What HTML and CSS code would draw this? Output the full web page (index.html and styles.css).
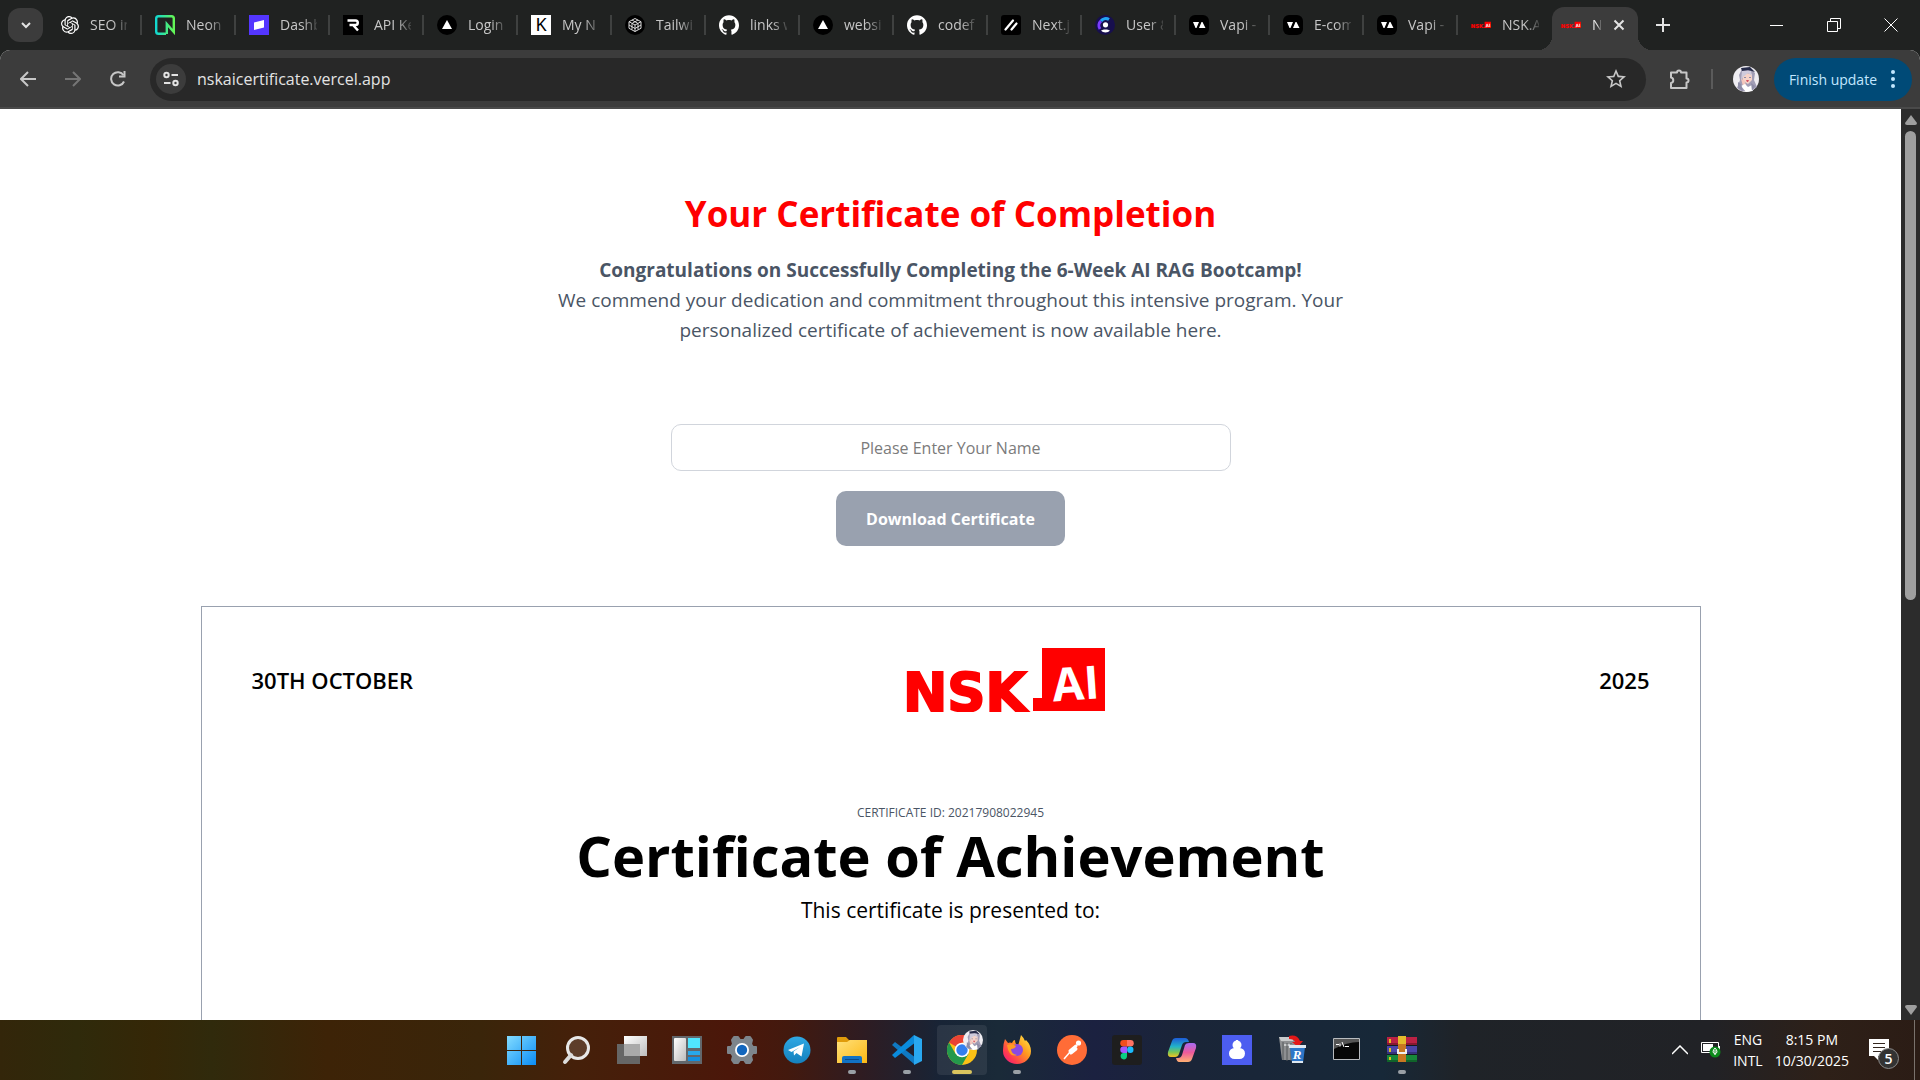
FILE: index.html
```html
<!DOCTYPE html>
<html lang="en">
<head>
<meta charset="utf-8">
<title>NSK.AI Certificate</title>
<link rel="stylesheet" href="styles.css">
</head>
<body>
<svg class="defs" aria-hidden="true">
  <defs>
    <linearGradient id="neon" x1="0" y1="0" x2="1" y2="0"><stop offset="0" stop-color="#12d8d0"/><stop offset="1" stop-color="#63f655"/></linearGradient>
    <linearGradient id="win" x1="0" y1="0" x2="1" y2="1"><stop offset="0" stop-color="#83dcff"/><stop offset="1" stop-color="#0a8cf5"/></linearGradient>
    <linearGradient id="silver" x1="0" y1="0" x2="1" y2="1"><stop offset="0" stop-color="#fff"/><stop offset="1" stop-color="#bdbdbd"/></linearGradient>
    <linearGradient id="folder" x1="0" y1="0" x2="1" y2="1"><stop offset="0" stop-color="#ffe07a"/><stop offset="1" stop-color="#fcb813"/></linearGradient>
    <linearGradient id="tele" x1="0" y1="0" x2="0" y2="1"><stop offset="0" stop-color="#2fa8e4"/><stop offset="1" stop-color="#1480bd"/></linearGradient>
    <linearGradient id="fox" x1="1" y1="0" x2="0" y2="1"><stop offset="0" stop-color="#fff04a"/><stop offset=".4" stop-color="#ff9a1f"/><stop offset=".75" stop-color="#ff3a50"/><stop offset="1" stop-color="#e4138f"/></linearGradient>
    <linearGradient id="copA" x1="0" y1="0" x2="0" y2="1"><stop offset="0" stop-color="#1d5bd8"/><stop offset=".45" stop-color="#22b3c9"/><stop offset=".75" stop-color="#7cc653"/><stop offset="1" stop-color="#f6c324"/></linearGradient>
    <linearGradient id="copB" x1="0" y1="0" x2="0" y2="1"><stop offset="0" stop-color="#a66af2"/><stop offset=".5" stop-color="#ee5a9a"/><stop offset="1" stop-color="#ffb072"/></linearGradient>
    <symbol id="i-github" viewBox="0 0 24 24"><path fill="#fff" d="M12 .297c-6.63 0-12 5.373-12 12 0 5.303 3.438 9.8 8.205 11.385.6.113.82-.258.82-.577 0-.285-.01-1.04-.015-2.04-3.338.724-4.042-1.61-4.042-1.61C4.422 18.07 3.633 17.7 3.633 17.7c-1.087-.744.084-.729.084-.729 1.205.084 1.838 1.236 1.838 1.236 1.07 1.835 2.809 1.305 3.495.998.108-.776.417-1.305.76-1.605-2.665-.3-5.466-1.332-5.466-5.93 0-1.31.465-2.38 1.235-3.22-.135-.303-.54-1.523.105-3.176 0 0 1.005-.322 3.3 1.23.96-.267 1.98-.399 3-.405 1.02.006 2.04.138 3 .405 2.28-1.552 3.285-1.23 3.285-1.23.645 1.653.24 2.873.12 3.176.765.84 1.23 1.91 1.23 3.22 0 4.61-2.805 5.625-5.475 5.92.42.36.81 1.096.81 2.22 0 1.606-.015 2.896-.015 3.286 0 .315.21.69.825.57C20.565 22.092 24 17.592 24 12.297c0-6.627-5.373-12-12-12"/></symbol>
    <symbol id="i-vercel" viewBox="0 0 20 20"><circle cx="10" cy="10" r="10"/><path fill="#fff" d="M10 5l5 9H5z"/></symbol>
    <symbol id="i-vapi" viewBox="0 0 20 20"><rect width="20" height="20" rx="6"/><path fill="#fff" d="M4 7h6l-2.500 6h-1zM12.500 7h1l3 6h-6.500z"/></symbol>
    <symbol id="i-nsk" viewBox="0 0 200 64"><path fill="#f00" d="M136 0h63v63h-72V50h9z"/><text class="nsk-word" x="-3" y="63">NSK</text><text class="nsk-ai" x="146" y="52" transform="rotate(-4 168 34)">AI</text></symbol>
    <symbol id="i-face" viewBox="0 0 26 26"><circle cx="13" cy="13" r="13" fill="#efedf2"/><path fill="#a19db5" d="M4 22l3-8-1-5 3-6 8-1 5 5-1 7 3 7-6 4H8z"/><path fill="#f6d3c8" d="M9 9l4-2 6 1v6l-4 4-5-3z"/><path fill="#272c4a" d="M8 2l9-1 5 5-7-2-6 1z"/><path fill="#cfcbdc" d="M9 5l9 0 1 5-4-3-5 4-2 3z"/><path fill="#f3c7bd" d="M8 13l3 1 2 5-3 1z"/><path fill="#fff" d="M8 20l4-2 3 3 4-2 1 6-7 1z"/><path fill="#8d8ca6" d="M5 16l3 2 2 7-5-3zM18 17l4 3-3 5zM11 11h2v1h-2zM16 11h2v1h-2z"/><path fill="#d65261" d="M13 14h3l-1 2h-1z"/></symbol>
  </defs>
</svg>

<header class="tabstrip">
  <button class="tab-search" aria-label="Search tabs"><svg width="14" height="14" viewBox="0 0 14 14"><path d="M3 5l4 4 4-4" fill="none" stroke="#e3e3e3" stroke-width="2"/></svg></button>
  <nav class="tabs">
    <a class="tab" href="#"><svg class="fav small" viewBox="0 0 24 24"><path fill="#fff" d="M22.2819 9.8211a5.9847 5.9847 0 0 0-.5157-4.9108 6.0462 6.0462 0 0 0-6.5098-2.9A6.0651 6.0651 0 0 0 4.9807 4.1818a5.9847 5.9847 0 0 0-3.9977 2.9 6.0462 6.0462 0 0 0 .7427 7.0966 5.98 5.98 0 0 0 .511 4.9107 6.051 6.051 0 0 0 6.5146 2.9001A5.9847 5.9847 0 0 0 13.2599 24a6.0557 6.0557 0 0 0 5.7718-4.2058 5.9894 5.9894 0 0 0 3.9977-2.9001 6.0557 6.0557 0 0 0-.7475-7.0729zm-9.022 12.6081a4.4755 4.4755 0 0 1-2.8764-1.0408l.1419-.0804 4.7783-2.7582a.7948.7948 0 0 0 .3927-.6813v-6.7369l2.02 1.1686a.071.071 0 0 1 .038.052v5.5826a4.504 4.504 0 0 1-4.4945 4.4944zm-9.6607-4.1254a4.4708 4.4708 0 0 1-.5346-3.0137l.142.0852 4.783 2.7582a.7712.7712 0 0 0 .7806 0l5.8428-3.3685v2.3324a.0804.0804 0 0 1-.0332.0615L9.74 19.9502a4.4992 4.4992 0 0 1-6.1408-1.6464zM2.3408 7.8956a4.485 4.485 0 0 1 2.3655-1.9728V11.6a.7664.7664 0 0 0 .3879.6765l5.8144 3.3543-2.0201 1.1685a.0757.0757 0 0 1-.071 0l-4.8303-2.7865A4.504 4.504 0 0 1 2.3408 7.872zm16.5963 3.8558L13.1038 8.364 15.1192 7.2a.0757.0757 0 0 1 .071 0l4.8303 2.7913a4.4944 4.4944 0 0 1-.6765 8.1042v-5.6772a.79.79 0 0 0-.407-.667zm2.0107-3.0231l-.142-.0852-4.7735-2.7818a.7759.7759 0 0 0-.7854 0L9.409 9.2297V6.8974a.0662.0662 0 0 1 .0284-.0615l4.8303-2.7866a4.4992 4.4992 0 0 1 6.6802 4.66zM8.3065 12.863l-2.02-1.1638a.0804.0804 0 0 1-.038-.0567V6.0742a4.4992 4.4992 0 0 1 7.3757-3.4537l-.142.0805L8.704 5.459a.7948.7948 0 0 0-.3927.6813zm1.0976-2.3654l2.602-1.4998 2.6069 1.4998v2.9994l-2.5974 1.4997-2.6067-1.4997Z"/></svg><span class="tab-title">SEO in</span></a>
    <a class="tab" href="#"><svg class="fav" viewBox="0 0 20 20"><path fill="none" stroke="url(#neon)" stroke-width="2.400" d="M11 18.800H3.500a2.300 2.300 0 0 1-2.300-2.300V3.500a2.300 2.300 0 0 1 2.300-2.300h13a2.300 2.300 0 0 1 2.300 2.300v13.500l-7-8v10"/></svg><span class="tab-title">Neon</span></a>
    <a class="tab" href="#"><svg class="fav" viewBox="0 0 20 20"><path fill="#5436ff" d="M0 0h20v20H0z"/><path fill="#fff" d="M5 7.500L15 5v7.500L5 15z"/></svg><span class="tab-title">Dashb</span></a>
    <a class="tab" href="#"><svg class="fav" viewBox="0 0 20 20"><path d="M0 0h20v20H0z"/><path fill="none" stroke="#fff" stroke-width="2.500" d="M4.500 5.500h8a2 2 0 0 1 0 4.500H6.500M10.500 10.500l4.500 5"/></svg><span class="tab-title">API Ke</span></a>
    <a class="tab" href="#"><svg class="fav"><use href="#i-vercel"/></svg><span class="tab-title">Login</span></a>
    <a class="tab" href="#"><svg class="fav" viewBox="0 0 20 20"><path fill="#fff" d="M0 0h20v20H0z"/><text class="k-mark" x="10" y="16">K</text></svg><span class="tab-title">My N</span></a>
    <a class="tab" href="#"><svg class="fav" viewBox="0 0 20 20"><circle cx="10" cy="10" r="10"/><path fill="none" stroke="#ddd" d="M10 3.500l6 3.200v6.600l-6 3.200-6-3.200V6.700zM4 6.700l6 3.300 6-3.300M10 10v6.500M7 5l6 3.500M13 5L7 8.500M4 10l6 3.500 6-3.500M7 8.500v6M13 8.500v6"/></svg><span class="tab-title">Tailwin</span></a>
    <a class="tab" href="#"><svg class="fav"><use href="#i-github"/></svg><span class="tab-title">links w</span></a>
    <a class="tab" href="#"><svg class="fav"><use href="#i-vercel"/></svg><span class="tab-title">websit</span></a>
    <a class="tab" href="#"><svg class="fav"><use href="#i-github"/></svg><span class="tab-title">codef</span></a>
    <a class="tab" href="#"><svg class="fav" viewBox="0 0 20 20"><rect width="20" height="20" rx="3"/><path stroke="#fff" stroke-width="2.200" stroke-linecap="round" d="M4.500 14.500l7.500-9M10.500 14.500l5-6"/></svg><span class="tab-title">Next.js</span></a>
    <a class="tab" href="#"><svg class="fav" viewBox="0 0 20 20"><circle cx="10" cy="10" r="10" fill="#170f4e"/><path fill="none" stroke="#7a3cff" stroke-width="3" d="M5 14a6 6 0 0 1 1-8"/><path fill="none" stroke="#22a4f5" stroke-width="3" d="M6 6a6 6 0 0 1 8-1.500"/><circle cx="10.500" cy="9.800" r="2.600" fill="#fff"/><path fill="#fff" d="M6 15.500c2-1.500 7-1.500 9 0-2 2.500-7 2.500-9 0z"/></svg><span class="tab-title">User &amp;</span></a>
    <a class="tab" href="#"><svg class="fav"><use href="#i-vapi"/></svg><span class="tab-title">Vapi -</span></a>
    <a class="tab" href="#"><svg class="fav"><use href="#i-vapi"/></svg><span class="tab-title">E-com</span></a>
    <a class="tab" href="#"><svg class="fav"><use href="#i-vapi"/></svg><span class="tab-title">Vapi -</span></a>
    <a class="tab last" href="#"><svg class="fav"><use href="#i-nsk"/></svg><span class="tab-title">NSK.A</span></a>
    <div class="tab-active">
      <svg class="fav"><use href="#i-nsk"/></svg><span class="tab-title">N</span>
      <button class="plain" aria-label="Close tab"><svg width="14" height="14" viewBox="0 0 14 14"><path d="M2.500 2.500l9 9m0-9l-9 9" stroke="#e3e3e3" stroke-width="2"/></svg></button>
    </div>
  </nav>
  <button class="plain new-tab" aria-label="New tab"><svg width="14" height="14" viewBox="0 0 14 14"><path d="M7 0v14M0 7h14" stroke="#e3e3e3" stroke-width="2"/></svg></button>
  <div class="window-controls">
    <button class="plain" aria-label="Minimize"><svg width="14" height="14"><path d="M0 7.500h13" stroke="#fff"/></svg></button>
    <button class="plain" aria-label="Restore"><svg width="14" height="14"><path d="M.5 3.500h10v10H.5zM3.500 3V.5h10v10H11" fill="none" stroke="#fff"/></svg></button>
    <button class="plain" aria-label="Close"><svg width="14" height="14"><path d="M.5.5l13 13m0-13l-13 13" stroke="#fff"/></svg></button>
  </div>
</header>

<div class="toolbar">
  <button class="plain nav-btn" aria-label="Back"><svg width="16" height="16" viewBox="0 0 16 16"><path d="M16 8H1.500M8 1L1 8l7 7" fill="none" stroke="#c7c7c7" stroke-width="2"/></svg></button>
  <button class="plain nav-btn" aria-label="Forward"><svg width="16" height="16" viewBox="0 0 16 16"><path d="M0 8h14.500M8 1l7 7-7 7" fill="none" stroke="#757575" stroke-width="2"/></svg></button>
  <button class="plain nav-btn" aria-label="Reload"><svg width="16" height="16" viewBox="0 0 16 16"><path d="M14 10.500A6.700 6.700 0 1 1 13.500 4.300" fill="none" stroke="#c7c7c7" stroke-width="2"/><path d="M15.500 0v6.500H9v-2h4.500V0z" fill="#c7c7c7"/></svg></button>
  <div class="omnibox">
    <button class="site-info" aria-label="Site information"><svg width="16" height="16" viewBox="0 0 16 16" fill="none" stroke="#e3e3e3" stroke-width="2"><circle cx="3.500" cy="4" r="2.200"/><path d="M8.500 4H15M1 12h6.500"/><circle cx="12.500" cy="12" r="2.200"/></svg></button>
    <input class="url" aria-label="Address" value="nskaicertificate.vercel.app">
    <button class="plain star" aria-label="Bookmark"><svg width="20" height="20" viewBox="2 2 20 20"><path fill="#c7c7c7" d="M22 9.240l-7.190-.62L12 2 9.190 8.630 2 9.240l5.460 4.730L5.820 21 12 17.270 18.180 21l-1.630-7.030L22 9.240zM12 15.400l-3.760 2.270 1-4.280-3.320-2.880 4.380-.38L12 6.100l1.710 4.040 4.380.38-3.320 2.880 1 4.280L12 15.400z"/></svg></button>
  </div>
  <button class="plain ext" aria-label="Extensions"><svg width="22" height="22" viewBox="0 0 22 22"><path d="M2 4.500h6a2 2 0 0 1 4 0h5.500v6a2 2 0 0 1 0 4V20H2v-5a2.800 2.800 0 0 0 0-5.500z" fill="none" stroke="#c7c7c7" stroke-width="2" stroke-linejoin="round"/></svg></button>
  <span class="divider"></span>
  <button class="plain profile" aria-label="Profile"><svg width="26" height="26"><use href="#i-face"/></svg></button>
  <button class="update"><span>Finish update</span><svg width="4" height="18" fill="#c2e7ff"><circle cx="2" cy="2" r="2"/><circle cx="2" cy="9" r="2"/><circle cx="2" cy="16" r="2"/></svg></button>
</div>

<div class="viewport">
  <main class="page">
    <h1 class="page-title">Your Certificate of Completion</h1>
    <p class="intro"><strong>Congratulations on Successfully Completing the 6-Week AI RAG Bootcamp!</strong><br>We commend your dedication and commitment throughout this intensive program. Your<br>personalized certificate of achievement is now available here.</p>
    <form class="form">
      <input class="name" type="text" aria-label="Your name" placeholder="Please Enter Your Name">
      <button class="download" type="button">Download Certificate</button>
    </form>
    <section class="certificate">
      <div class="cert-head"><span>30TH OCTOBER</span><svg class="logo" role="img" aria-label="NSK AI"><use href="#i-nsk"/></svg><span>2025</span></div>
      <p class="cert-id">CERTIFICATE ID: 20217908022945</p>
      <h2 class="cert-title">Certificate of Achievement</h2>
      <p class="cert-to">This certificate is presented to:</p>
    </section>
  </main>
  <div class="scrollbar">
    <svg width="12" height="10"><path d="M6 0l6 8q0 2-2 2H2q-2 0-2-2z" fill="#9f9f9f"/></svg>
    <div class="track"><div class="thumb"></div></div>
    <svg width="12" height="10"><path d="M6 10l6-8q0-2-2-2H2Q0 0 0 2z" fill="#9f9f9f"/></svg>
  </div>
</div>

<footer class="taskbar">
  <nav class="apps">
    <button class="app" aria-label="Start"><svg viewBox="0 0 30 30"><path fill="url(#win)" d="M0 1h14v14H0zM15 1h14v14H15zM0 16h14v14H0zM15 16h14v14H15z"/></svg></button>
    <button class="app" aria-label="Search"><svg viewBox="0 0 30 30"><circle cx="16" cy="13" r="10.500" fill="#ffffff22" stroke="#e8e8e8" stroke-width="3"/><path d="M9 20l-6 7" stroke="#dcdcdc" stroke-width="4" stroke-linecap="round"/></svg></button>
    <button class="app" aria-label="Task view"><svg viewBox="0 0 30 30"><path fill="#666" d="M0 9h23v20H0z"/><path fill="url(#silver)" d="M7 1h23v20H7z"/><path fill="#a9a9a9" d="M7 9h16v12H7z"/></svg></button>
    <button class="app" aria-label="Widgets"><svg viewBox="0 0 30 30"><path fill="#62676c" d="M0 1h30v28H0z"/><rect x="2" y="3" width="12" height="23" rx="1" fill="url(#silver)"/><path fill="#50e6ff" d="M16 3h12v10H16z"/><path fill="#28a8ea" d="M16 16h12v4H16z"/><path fill="#1490df" d="M16 22h12v4H16z"/></svg></button>
    <button class="app" aria-label="Settings"><svg viewBox="0 0 30 30"><path fill="#7d858c" stroke="#7d858c" stroke-width="2" stroke-linejoin="round" d="M7 2h4l2 3h4l2-3h4l2 3-1 4 2 3h3v6h-3l-2 3 1 4-2 3h-4l-2-3h-4l-2 3H7l-2-3 1-4-2-3H1v-6h3l2-3-1-4z"/><circle cx="15" cy="15" r="7" fill="#fff"/><circle cx="15" cy="15" r="5.200" fill="#1266bd"/></svg></button>
    <button class="app" aria-label="Telegram"><svg viewBox="0 0 30 30"><circle cx="15" cy="15" r="13.500" fill="url(#tele)"/><path fill="#fff" d="M6 15l16-6.500-2.500 13-5-3.500-2.500 2.500-.5-4L18 12l-8.500 5z"/></svg></button>
    <button class="app running" aria-label="File Explorer"><svg viewBox="0 0 30 30"><path fill="#e09b0b" d="M0 3q0-1 1-1h8l3 3h18v6H0z"/><path fill="url(#folder)" d="M0 7h10l3-2h17v23H0z"/><path fill="#1272c4" d="M5 28v-5q0-2 2-2h16q2 0 2 2v5z"/><path stroke="#0a4a8a" d="M8 24.500h14"/></svg></button>
    <button class="app running" aria-label="Visual Studio Code"><svg viewBox="0 0 30 30"><path fill="#0f79c2" d="M0 10l3-3L24 23l-2 6z"/><path fill="#0a8bdc" d="M0 20l3 3L24 7l-2-7z"/><path fill="#29a8f0" d="M22 0l8 4v22l-8 4z"/></svg></button>
    <button class="app running active" aria-label="Google Chrome"><svg viewBox="0 0 30 30"><circle cx="15" cy="15" r="15" fill="#fbc116"/><path fill="#e94335" d="M15 15L2 7.500A15 15 0 0 1 28 7.500H15z"/><path fill="#24994c" d="M2 7.500A15 15 0 0 0 15 30l6.500-11.200L15 15 8.500 18.800z"/><circle cx="15" cy="15" r="7.300" fill="#fff"/><circle cx="15" cy="15" r="5.700" fill="#347fee"/></svg><svg class="badge"><use href="#i-face"/></svg></button>
    <button class="app running" aria-label="Firefox"><svg viewBox="0 0 30 30"><path fill="url(#fox)" d="M1 15q0-6 2-11l3 4q2-1 4 0 1-3 3-3 0 4 3 6l3-11q3 3 4 6l1-1q5 5 5 11A14 13 0 0 1 1 16z"/><circle cx="15" cy="15" r="6" fill="#8a4ae2"/><path fill="#ff9b22" d="M5 10q5-2 9 1-1 3-5 3 0 5 6 6-8 3-10-10z"/></svg></button>
    <button class="app" aria-label="Postman"><svg viewBox="0 0 30 30"><circle cx="15" cy="15" r="15" fill="#ff6c37"/><circle cx="21.500" cy="8" r="2.600" fill="#fff"/><path fill="none" stroke="#fff" stroke-width="3" stroke-linecap="round" stroke-linejoin="round" d="M19 11l-6 5 1 2 5-4"/><path stroke="#fff" stroke-width="1.500" d="M13 17l-6 7"/></svg></button>
    <button class="app" aria-label="Figma"><svg viewBox="0 0 30 30"><rect width="30" height="30" rx="3" fill="#1e1e1e"/><path fill="#f24e1e" d="M15 5h-3.500a3.200 3.200 0 0 0 0 6.500H15z"/><path fill="#ff7262" d="M15 5h3.500a3.200 3.200 0 0 1 0 6.500H15z"/><path fill="#a259ff" d="M15 11.500h-3.500a3.200 3.200 0 0 0 0 6.500H15z"/><circle cx="18.300" cy="14.800" r="3.200" fill="#1abcfe"/><path fill="#0acf83" d="M15 18h-3.500a3.200 3.200 0 1 0 3.500 3.300z"/></svg></button>
    <button class="app" aria-label="Copilot"><svg viewBox="0 0 30 30"><path fill="url(#copA)" d="M9 3h9q3 0 4 4h-3q-3 0-4 3l-3 9q-1 3-4 3H4q-4 0-3-5L5 6q1-3 4-3z"/><path fill="url(#copB)" d="M21 27h-9q-2 0-3-4h2q3 0 4-3l3-10q1-2 4-2h4q4 0 3 5l-4 11q-1 3-4 3z"/></svg></button>
    <button class="app" aria-label="Account lock"><svg viewBox="0 0 30 30"><path fill="#4c5df0" d="M0 0h30v30H0z"/><circle cx="15" cy="10" r="4.500" fill="#fff"/><rect x="7" y="13" width="16" height="11" rx="5.500" fill="#fff"/><path fill="#fff" d="M14 5h2v3h-2z"/></svg></button>
    <button class="app" aria-label="Uninstaller"><svg viewBox="0 0 30 30"><path fill="#8d8f91" d="M2 2h14l3 3v20H5z"/><path fill="#c9cbcc" d="M2 2h14v4H4zM7 9h8v2H7z"/><path stroke="#55585a" d="M6 7v18M10 8v18M14 8v18"/><path fill="#e31818" d="M12 1q8-2 11 5h3l-5 6-6-5h3q-1-3-6-3z"/><path fill="#2d76c8" d="M13 12h15l-2 16H15z"/><path fill="#dfe8f0" d="M12 10h17v3H12zM15 26h11v2H15z"/><text class="r-mark" x="20" y="24">R</text></svg></button>
    <button class="app" aria-label="Command Prompt"><svg viewBox="0 0 30 30"><path fill="#070707" stroke="#b9bcbf" d="M1.500 3.500h26v21h-26z"/><path fill="#555" d="M2 4h25v3q-12 0-25 7z"/><path stroke="#fff" d="M4 9.500h3M8 8.500v3M10 7l2 5M13 11.500h4"/></svg></button>
    <button class="app running" aria-label="WinRAR"><svg viewBox="0 0 30 30"><path fill="#bb2144" d="M0 2h30v8H0z"/><path fill="#4b45a8" d="M0 11h30v8H0z"/><path fill="#17883a" d="M0 20h30v7H0z"/><path fill="#00000044" d="M0 8h30v3H0zM0 17h30v3H0zM0 25h30v2H0z"/><path fill="#e0c020" d="M2 4h2v4H2zM2 13h2v4H2zM2 22h2v3H2z"/><path fill="#c87722" d="M11 2h8v25h-8z"/><path fill="#e3bb2c" d="M11 1h8v8h-8z"/><path fill="none" stroke="#eee" stroke-width="2" d="M11 14v4h8v-4"/></svg></button>
  </nav>
  <div class="tray">
    <button class="plain" aria-label="Show hidden icons"><svg width="16" height="10"><path d="M0 9l8-8 8 8" fill="none" stroke="#fff" stroke-width="1.500"/></svg></button>
    <button class="plain battery" aria-label="Battery"><svg width="20" height="16"><path d="M.5.5h17v10H.5z" fill="none" stroke="#fff"/><path fill="#fff" d="M2 2h10v7H2zM18 4h1v4h-1z"/><circle cx="14" cy="10" r="5.500" fill="#0b8a1a"/><path d="M14 13V8M12 10q0-2 2-4 2 2 2 4-1 2-2 2t-2-2" fill="none" stroke="#fff"/></svg></button>
    <div class="lines lang"><span>ENG</span><span>INTL</span></div>
    <div class="lines"><span>8:15 PM</span><span>10/30/2025</span></div>
    <button class="plain notify" aria-label="Notifications"><svg width="20" height="22"><path fill="#fff" d="M0 0h20v17H9v4l-4-4H0z"/><path stroke="#33261f" d="M4 4.500h12M4 8.500h12M4 12.500h8"/></svg><span class="count">5</span></button>
    <span class="peek"></span>
  </div>
</footer>
</body>
</html>
```
FILE: styles.css
```css
* { box-sizing: border-box; }
body {
  margin: 0;
  height: 100vh;
  display: grid;
  grid-template-rows: 50px 59px minmax(0, 1fr) 60px;
  overflow: hidden;
  font-family: "Open Sans", "Noto Sans", sans-serif;
  background: #fff;
}
h1, h2, p { margin: 0; }
button, input { font: inherit; border: 0; margin: 0; padding: 0; }
svg { display: block; flex: none; }
.defs { position: absolute; width: 0; height: 0; }
.plain { background: none; display: grid; place-items: center; flex: none; }

/* Tab strip */
.tabstrip { display: flex; background: #202221; padding-left: 8px; }
.tab-search {
  width: 35px; height: 34px; margin-top: 8px; border-radius: 12px;
  background: #3c3c3c; display: grid; place-items: center; flex: none;
}
.tabs { display: flex; margin-left: 4px; min-width: 0; }
.tab {
  position: relative; width: 94px; padding-left: 14px;
  display: flex; align-items: center; gap: 11px;
  color: #c7c7c7; text-decoration: none;
}
.tab::after {
  content: ""; position: absolute; right: -1px; top: 15px;
  width: 2px; height: 20px; background: #3f4140;
}
.tab.last::after { display: none; }
.fav { width: 20px; height: 20px; }
.fav.small { width: 18px; height: 18px; }
.tab-title {
  width: 37px; overflow: hidden; white-space: nowrap;
  font-size: 14px; line-height: 20px;
  mask-image: linear-gradient(90deg, #000 60%, #0003);
}
.tab-active {
  position: relative; width: 86px; height: 43px; margin: 7px 0 0 1px;
  padding: 0 12px 7px 9px; border-radius: 12px 12px 0 0; background: #3c3c3c;
  display: flex; align-items: center; gap: 11px; color: #e3e3e3;
}
.tab-active .tab-title { width: 9px; flex: none; }
.tab-active::before, .tab-active::after {
  content: ""; position: absolute; bottom: 0; width: 14px; height: 14px;
}
.tab-active::before { left: -14px; background: radial-gradient(circle at 0 0, transparent 14px, #3c3c3c 14px); }
.tab-active::after { right: -14px; background: radial-gradient(circle at 100% 0, transparent 14px, #3c3c3c 14px); }
.new-tab { width: 50px; }
.window-controls { margin-left: auto; padding-right: 1px; display: flex; }
.window-controls .plain { width: 57px; }

/* Toolbar */
.toolbar {
  display: flex; align-items: center; padding: 0 8px 1px 5px;
  background: linear-gradient(#3c3c3c 57px, #4a4a4a 57px);
  border-radius: 10px 10px 0 0; box-shadow: 0 -10px 0 #202221;
  clip-path: inset(0);
}
.nav-btn { width: 45px; height: 40px; }
.omnibox {
  flex: 1; height: 43px; margin-left: 10px; padding: 0 20px 0 6px;
  border-radius: 22px; background: #282828; display: flex; align-items: center;
}
.site-info {
  width: 30px; height: 30px; border-radius: 50%; background: #3c3c3c;
  display: grid; place-items: center; flex: none;
}
.url { flex: 1; min-width: 0; margin-left: 11px; background: none; color: #e3e3e3; font-size: 16px; line-height: 24px; outline: 0; }
.ext { margin-left: 23px; }
.divider { width: 2px; height: 20px; margin: 0 20px; background: #5b5b5b; }
.update {
  height: 43px; margin-left: 15px; padding: 0 17px 0 15px; border-radius: 22px;
  background: #004a77; color: #c2e7ff; font-size: 14px;
  display: flex; align-items: center; gap: 14px; white-space: nowrap;
}

/* Page */
.viewport { display: flex; min-height: 0; background: #fff; }
.page { flex: 1; min-width: 0; overflow: hidden; padding-top: 80px; text-align: center; }
.page-title { color: #f00; font-size: 35px; line-height: 50px; font-weight: 700; }
.intro { margin-top: 16px; color: #4a5565; font-size: 19px; line-height: 30px; }
.form { display: flex; flex-direction: column; align-items: center; gap: 20px; margin-top: 79px; }
.name {
  width: 560px; height: 47px; border: 1px solid #d1d5dc; border-radius: 10px;
  text-align: center; font-size: 16px; background: #fff;
}
.name::placeholder { color: #7b7b7b; opacity: 1; }
.download {
  height: 55px; padding: 0 30px; border-radius: 10px;
  background: #99a1af; color: #fff; font-size: 16px; font-weight: 700;
}
.certificate {
  max-width: 1500px; min-height: 600px; margin: 60px auto 0; padding: 41px 50px;
  border: 1px solid #99a1af; color: #000;
}
.cert-head { display: flex; align-items: center; justify-content: space-between; font-size: 22px; font-weight: 600; }
.logo { width: 200px; height: 64px; }
.cert-id { margin-top: 91px; font-size: 12px; line-height: 20px; color: #4a5565; }
.cert-title { font-size: 56px; line-height: 64px; font-weight: 700; }
.cert-to { margin-top: 7px; font-size: 21px; line-height: 32px; }
.nsk-word { font: 700 53px "DejaVu Sans", sans-serif; fill: #f00; stroke: #f00; stroke-width: 2px; }
.nsk-ai { font: 700 46px "Open Sans", sans-serif; fill: #fff; }
.k-mark { font: 18px "Noto Sans", sans-serif; text-anchor: middle; }
.r-mark { font: italic 700 13px "Liberation Serif", serif; fill: #fff; text-anchor: middle; }

.scrollbar { width: 19px; background: #2c2c2c; display: flex; flex-direction: column; align-items: center; padding: 6px 0 5px; }
.track { flex: 1; width: 11px; padding: 6px 0; }
.thumb { height: 54%; border-radius: 6px; background: #9f9f9f; }

/* Taskbar */
.taskbar {
  display: grid; grid-template-columns: 1fr auto 1fr;
  background: linear-gradient(90deg, #33260a, #2f2a0b 4%, #352707 8%, #302a0c 11%, #3d2307 17%, #3a250a 25%, #45200a 30%, #4b170a 38%, #43190e 41%, #2e1c22 45%, #182436 49%, #1a2a38 52%, #1b2140 57%, #1a2538 62%, #172838 72%, #1f2328 76%, #212226 89%, #2e2018 95%, #2b1c15);
}
.apps { grid-column: 2; padding-left: 4px; display: flex; align-items: center; gap: 5px; }
.app { position: relative; width: 50px; height: 50px; border-radius: 4px; background: none; display: grid; place-items: center; }
.app > svg { width: 30px; height: 30px; }
.app > .badge { position: absolute; right: 4px; top: 5px; width: 20px; height: 20px; }
.active { background: #ffffff14; }
.running::after { content: ""; position: absolute; left: 21px; bottom: 1px; width: 8px; height: 4px; border-radius: 2px; background: #9aa0a6; }
.active::after { left: 15px; width: 20px; background: #d9c45e; }
.tray { grid-column: 3; display: flex; align-items: center; justify-content: flex-end; padding-right: 5px; color: #fff; }
.lines { display: flex; flex-direction: column; align-items: center; font-size: 14px; line-height: 21px; }
.lang { margin: 0 12px 0 12px; }
.battery { margin-left: 13px; }
.notify { position: relative; margin: 0 25px 0 20px; }
.count {
  position: absolute; left: 9px; top: 9px; width: 21px; height: 21px; border-radius: 50%;
  border: 1px solid #8b8b8b; background: #333; color: #fff; font-size: 14px; line-height: 19px; font-weight: 600;
}
.peek { width: 1px; height: 60px; background: #7a726c; }
```
